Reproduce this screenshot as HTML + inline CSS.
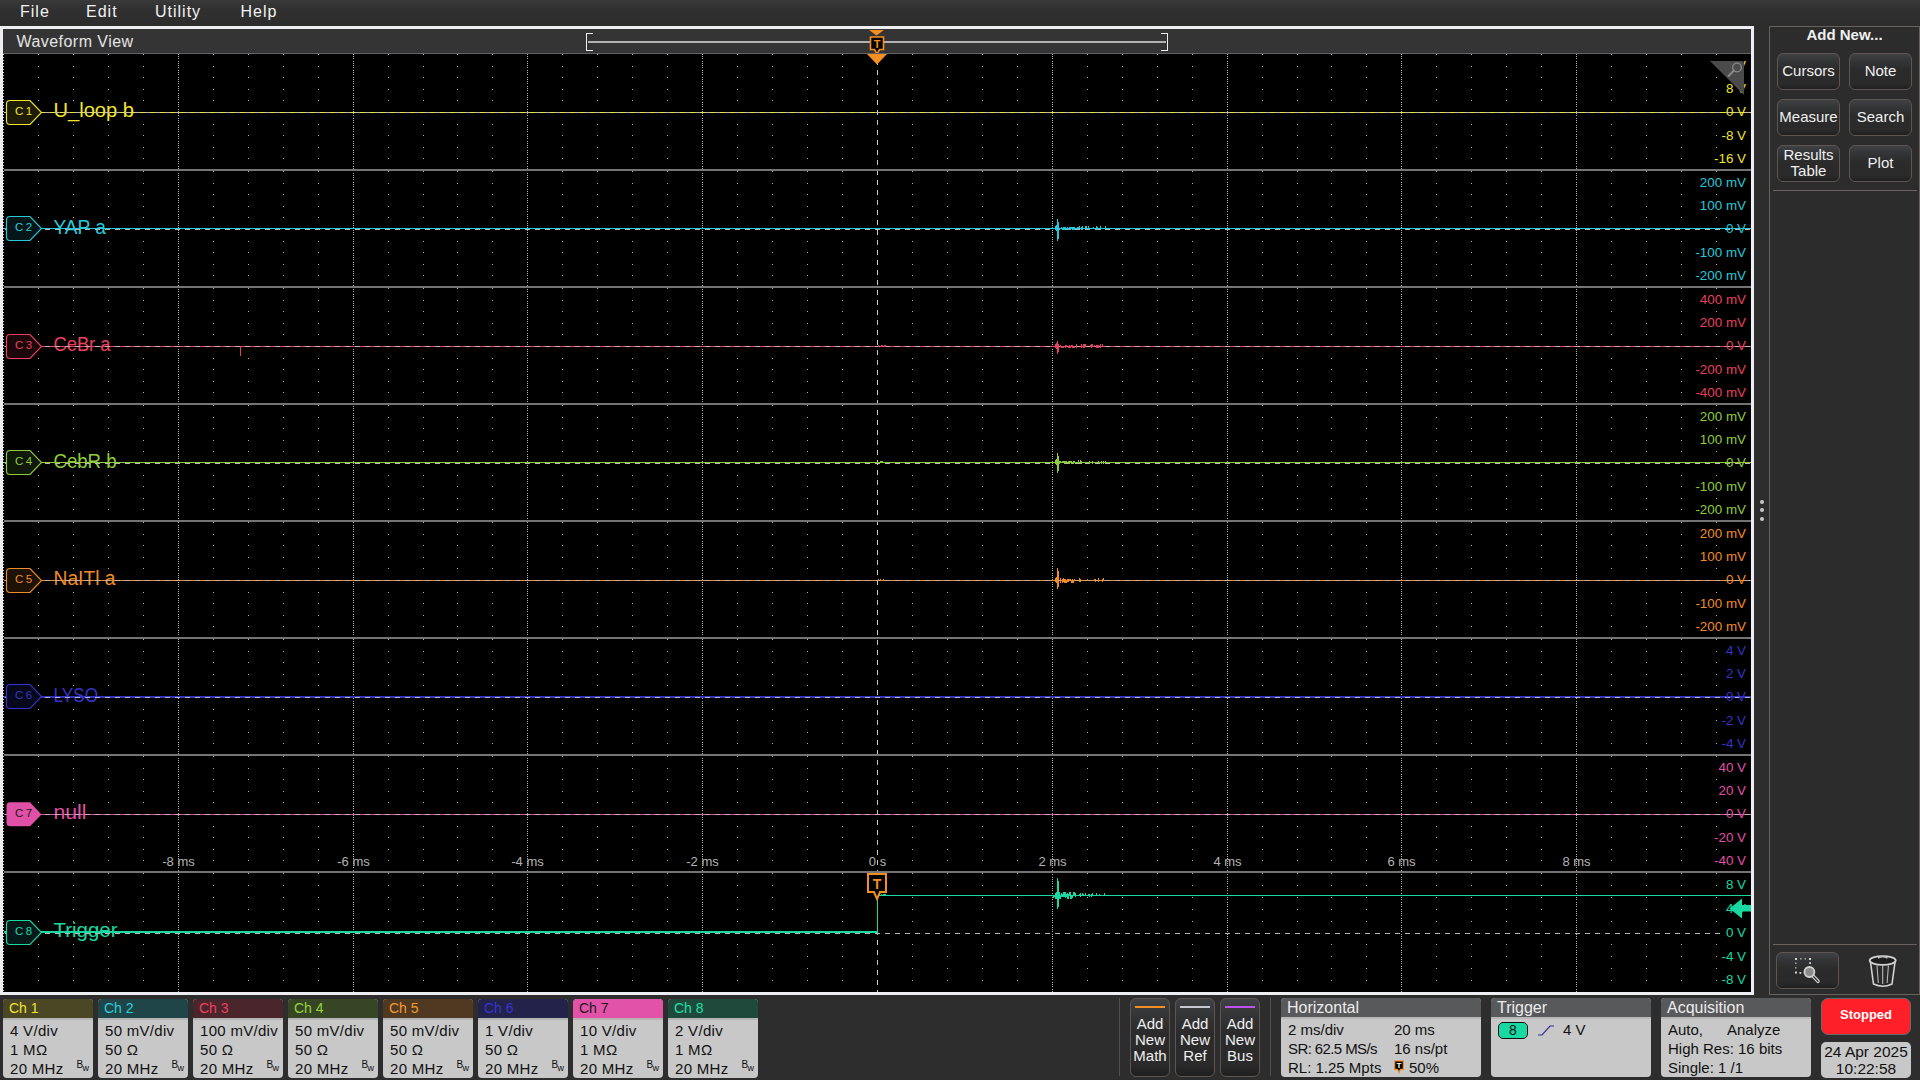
<!DOCTYPE html><html><head><meta charset="utf-8"><style>
html,body{margin:0;padding:0;width:1920px;height:1080px;overflow:hidden;background:#2d2d2d;font-family:"Liberation Sans", sans-serif}
.a{position:absolute}
.menu{left:0;top:0;width:1920px;height:26px;background:linear-gradient(#3a3a3a,#303030 35%,#2c2c2c)}
.mi{position:absolute;top:3px;font-size:16px;letter-spacing:1px;color:#f2f2f2}
.frame{left:0;top:26px;width:1748px;height:963px;border:3px solid #eceef1}
.hdr{left:3px;top:29px;width:1748px;height:24px;background:#343434}
.btn{position:absolute;border:1px solid #5e5550;border-radius:6px;background:linear-gradient(#404144,#333436 22%,#2b2b2b 45%,#2a2a2a 85%,#1f1f1f);color:#f0f0f0;font-size:15px;text-align:center;box-sizing:border-box}
.chb{position:absolute;top:999px;width:90px;height:79px;border-radius:4px;background:#c8c8c8;overflow:hidden}
.chb .h{height:19px;font-size:14px;padding-left:6px;line-height:19px}
.chb .bd{border-top:2px solid #b4b4b4;padding-left:7px;padding-top:1px;font-size:15px;letter-spacing:0.3px;color:#111;line-height:19px}
.box{position:absolute;top:998px;height:79px;border-radius:4px;background:#c8c8c8;overflow:hidden}
.box .h{height:19px;background:#58595b;color:#ececec;font-size:16px;line-height:19px;padding-left:6px}
.box .bd{border-top:2px solid #b8b8b8}
.t{position:absolute;font-size:15px;letter-spacing:0px;color:#111;white-space:nowrap;margin-top:1px}

</style></head><body>
<div class="a menu">
<div class="mi" style="left:20px">File</div>
<div class="mi" style="left:86px">Edit</div>
<div class="mi" style="left:155px">Utility</div>
<div class="mi" style="left:240.5px">Help</div>
</div>
<div class="a frame"></div>
<div class="a hdr"><div style="position:absolute;left:13.5px;top:4px;font-size:16px;letter-spacing:0.45px;color:#e4e4e4">Waveform View</div></div>
<div class="a" style="left:586px;top:33px;width:6px;height:16px;border:1.5px solid #eeeeee;border-right:none"></div>
<div class="a" style="left:1161px;top:33px;width:6px;height:16px;border:1.5px solid #eeeeee;border-left:none"></div>
<div class="a" style="left:588px;top:41px;width:578px;height:2px;background:#b2b2b2"></div>
<svg class="a" style="left:860px;top:26px" width="34" height="30"><path d="M9 4 H24 L16.5 9.5 Z" fill="#f28e22"/><path d="M10.5 11 H23.5 V23.5 H19.5 L17 28 L14.5 23.5 H10.5 Z" fill="#000" stroke="#f28e22" stroke-width="1.6"/><text x="17" y="21.5" font-size="11" font-weight="bold" fill="#f28e22" text-anchor="middle" font-family='"Liberation Sans", sans-serif'>T</text></svg>
<svg width="1920" height="1080" style="position:absolute;left:0;top:0" shape-rendering="crispEdges">
<rect x="3" y="53" width="1748" height="939" fill="#000"/>
<rect x="3" y="53" width="1748" height="1" fill="#5f6166"/>
<line x1="3.5" y1="54" x2="3.5" y2="992" stroke="#d0d0d0" stroke-width="1" stroke-dasharray="1 2"/>
<path d="M38 54.5h1m34 0h1m34 0h1m34 0h1m69 0h1m34 0h1m34 0h1m34 0h1m69 0h1m34 0h1m33 0h1m34 0h1m69 0h1m34 0h1m34 0h1m34 0h1m69 0h1m34 0h1m34 0h1m34 0h1m69 0h1m34 0h1m34 0h1m34 0h1m69 0h1m34 0h1m34 0h1m34 0h1m69 0h1m34 0h1m33 0h1m34 0h1m69 0h1m34 0h1m34 0h1m34 0h1m69 0h1m34 0h1m34 0h1m34 0h1M38 66.5h1m34 0h1m34 0h1m34 0h1m69 0h1m34 0h1m34 0h1m34 0h1m69 0h1m34 0h1m33 0h1m34 0h1m69 0h1m34 0h1m34 0h1m34 0h1m69 0h1m34 0h1m34 0h1m34 0h1m69 0h1m34 0h1m34 0h1m34 0h1m69 0h1m34 0h1m34 0h1m34 0h1m69 0h1m34 0h1m33 0h1m34 0h1m69 0h1m34 0h1m34 0h1m34 0h1m69 0h1m34 0h1m34 0h1m34 0h1M38 77.5h1m34 0h1m34 0h1m34 0h1m69 0h1m34 0h1m34 0h1m34 0h1m69 0h1m34 0h1m33 0h1m34 0h1m69 0h1m34 0h1m34 0h1m34 0h1m69 0h1m34 0h1m34 0h1m34 0h1m69 0h1m34 0h1m34 0h1m34 0h1m69 0h1m34 0h1m34 0h1m34 0h1m69 0h1m34 0h1m33 0h1m34 0h1m69 0h1m34 0h1m34 0h1m34 0h1m69 0h1m34 0h1m34 0h1m34 0h1M38 89.5h1m34 0h1m34 0h1m34 0h1m69 0h1m34 0h1m34 0h1m34 0h1m69 0h1m34 0h1m33 0h1m34 0h1m69 0h1m34 0h1m34 0h1m34 0h1m69 0h1m34 0h1m34 0h1m34 0h1m69 0h1m34 0h1m34 0h1m34 0h1m69 0h1m34 0h1m34 0h1m34 0h1m69 0h1m34 0h1m33 0h1m34 0h1m69 0h1m34 0h1m34 0h1m34 0h1m69 0h1m34 0h1m34 0h1m34 0h1M38 100.5h1m34 0h1m34 0h1m34 0h1m69 0h1m34 0h1m34 0h1m34 0h1m69 0h1m34 0h1m33 0h1m34 0h1m69 0h1m34 0h1m34 0h1m34 0h1m69 0h1m34 0h1m34 0h1m34 0h1m69 0h1m34 0h1m34 0h1m34 0h1m69 0h1m34 0h1m34 0h1m34 0h1m69 0h1m34 0h1m33 0h1m34 0h1m69 0h1m34 0h1m34 0h1m34 0h1m69 0h1m34 0h1m34 0h1m34 0h1M38 124.5h1m34 0h1m34 0h1m34 0h1m69 0h1m34 0h1m34 0h1m34 0h1m69 0h1m34 0h1m33 0h1m34 0h1m69 0h1m34 0h1m34 0h1m34 0h1m69 0h1m34 0h1m34 0h1m34 0h1m69 0h1m34 0h1m34 0h1m34 0h1m69 0h1m34 0h1m34 0h1m34 0h1m69 0h1m34 0h1m33 0h1m34 0h1m69 0h1m34 0h1m34 0h1m34 0h1m69 0h1m34 0h1m34 0h1m34 0h1M38 135.5h1m34 0h1m34 0h1m34 0h1m69 0h1m34 0h1m34 0h1m34 0h1m69 0h1m34 0h1m33 0h1m34 0h1m69 0h1m34 0h1m34 0h1m34 0h1m69 0h1m34 0h1m34 0h1m34 0h1m69 0h1m34 0h1m34 0h1m34 0h1m69 0h1m34 0h1m34 0h1m34 0h1m69 0h1m34 0h1m33 0h1m34 0h1m69 0h1m34 0h1m34 0h1m34 0h1m69 0h1m34 0h1m34 0h1m34 0h1M38 147.5h1m34 0h1m34 0h1m34 0h1m69 0h1m34 0h1m34 0h1m34 0h1m69 0h1m34 0h1m33 0h1m34 0h1m69 0h1m34 0h1m34 0h1m34 0h1m69 0h1m34 0h1m34 0h1m34 0h1m69 0h1m34 0h1m34 0h1m34 0h1m69 0h1m34 0h1m34 0h1m34 0h1m69 0h1m34 0h1m33 0h1m34 0h1m69 0h1m34 0h1m34 0h1m34 0h1m69 0h1m34 0h1m34 0h1m34 0h1M38 158.5h1m34 0h1m34 0h1m34 0h1m69 0h1m34 0h1m34 0h1m34 0h1m69 0h1m34 0h1m33 0h1m34 0h1m69 0h1m34 0h1m34 0h1m34 0h1m69 0h1m34 0h1m34 0h1m34 0h1m69 0h1m34 0h1m34 0h1m34 0h1m69 0h1m34 0h1m34 0h1m34 0h1m69 0h1m34 0h1m33 0h1m34 0h1m69 0h1m34 0h1m34 0h1m34 0h1m69 0h1m34 0h1m34 0h1m34 0h1M38 171.5h1m34 0h1m34 0h1m34 0h1m69 0h1m34 0h1m34 0h1m34 0h1m69 0h1m34 0h1m33 0h1m34 0h1m69 0h1m34 0h1m34 0h1m34 0h1m69 0h1m34 0h1m34 0h1m34 0h1m69 0h1m34 0h1m34 0h1m34 0h1m69 0h1m34 0h1m34 0h1m34 0h1m69 0h1m34 0h1m33 0h1m34 0h1m69 0h1m34 0h1m34 0h1m34 0h1m69 0h1m34 0h1m34 0h1m34 0h1M38 183.5h1m34 0h1m34 0h1m34 0h1m69 0h1m34 0h1m34 0h1m34 0h1m69 0h1m34 0h1m33 0h1m34 0h1m69 0h1m34 0h1m34 0h1m34 0h1m69 0h1m34 0h1m34 0h1m34 0h1m69 0h1m34 0h1m34 0h1m34 0h1m69 0h1m34 0h1m34 0h1m34 0h1m69 0h1m34 0h1m33 0h1m34 0h1m69 0h1m34 0h1m34 0h1m34 0h1m69 0h1m34 0h1m34 0h1m34 0h1M38 194.5h1m34 0h1m34 0h1m34 0h1m69 0h1m34 0h1m34 0h1m34 0h1m69 0h1m34 0h1m33 0h1m34 0h1m69 0h1m34 0h1m34 0h1m34 0h1m69 0h1m34 0h1m34 0h1m34 0h1m69 0h1m34 0h1m34 0h1m34 0h1m69 0h1m34 0h1m34 0h1m34 0h1m69 0h1m34 0h1m33 0h1m34 0h1m69 0h1m34 0h1m34 0h1m34 0h1m69 0h1m34 0h1m34 0h1m34 0h1M38 206.5h1m34 0h1m34 0h1m34 0h1m69 0h1m34 0h1m34 0h1m34 0h1m69 0h1m34 0h1m33 0h1m34 0h1m69 0h1m34 0h1m34 0h1m34 0h1m69 0h1m34 0h1m34 0h1m34 0h1m69 0h1m34 0h1m34 0h1m34 0h1m69 0h1m34 0h1m34 0h1m34 0h1m69 0h1m34 0h1m33 0h1m34 0h1m69 0h1m34 0h1m34 0h1m34 0h1m69 0h1m34 0h1m34 0h1m34 0h1M38 217.5h1m34 0h1m34 0h1m34 0h1m69 0h1m34 0h1m34 0h1m34 0h1m69 0h1m34 0h1m33 0h1m34 0h1m69 0h1m34 0h1m34 0h1m34 0h1m69 0h1m34 0h1m34 0h1m34 0h1m69 0h1m34 0h1m34 0h1m34 0h1m69 0h1m34 0h1m34 0h1m34 0h1m69 0h1m34 0h1m33 0h1m34 0h1m69 0h1m34 0h1m34 0h1m34 0h1m69 0h1m34 0h1m34 0h1m34 0h1M38 241.5h1m34 0h1m34 0h1m34 0h1m69 0h1m34 0h1m34 0h1m34 0h1m69 0h1m34 0h1m33 0h1m34 0h1m69 0h1m34 0h1m34 0h1m34 0h1m69 0h1m34 0h1m34 0h1m34 0h1m69 0h1m34 0h1m34 0h1m34 0h1m69 0h1m34 0h1m34 0h1m34 0h1m69 0h1m34 0h1m33 0h1m34 0h1m69 0h1m34 0h1m34 0h1m34 0h1m69 0h1m34 0h1m34 0h1m34 0h1M38 252.5h1m34 0h1m34 0h1m34 0h1m69 0h1m34 0h1m34 0h1m34 0h1m69 0h1m34 0h1m33 0h1m34 0h1m69 0h1m34 0h1m34 0h1m34 0h1m69 0h1m34 0h1m34 0h1m34 0h1m69 0h1m34 0h1m34 0h1m34 0h1m69 0h1m34 0h1m34 0h1m34 0h1m69 0h1m34 0h1m33 0h1m34 0h1m69 0h1m34 0h1m34 0h1m34 0h1m69 0h1m34 0h1m34 0h1m34 0h1M38 264.5h1m34 0h1m34 0h1m34 0h1m69 0h1m34 0h1m34 0h1m34 0h1m69 0h1m34 0h1m33 0h1m34 0h1m69 0h1m34 0h1m34 0h1m34 0h1m69 0h1m34 0h1m34 0h1m34 0h1m69 0h1m34 0h1m34 0h1m34 0h1m69 0h1m34 0h1m34 0h1m34 0h1m69 0h1m34 0h1m33 0h1m34 0h1m69 0h1m34 0h1m34 0h1m34 0h1m69 0h1m34 0h1m34 0h1m34 0h1M38 275.5h1m34 0h1m34 0h1m34 0h1m69 0h1m34 0h1m34 0h1m34 0h1m69 0h1m34 0h1m33 0h1m34 0h1m69 0h1m34 0h1m34 0h1m34 0h1m69 0h1m34 0h1m34 0h1m34 0h1m69 0h1m34 0h1m34 0h1m34 0h1m69 0h1m34 0h1m34 0h1m34 0h1m69 0h1m34 0h1m33 0h1m34 0h1m69 0h1m34 0h1m34 0h1m34 0h1m69 0h1m34 0h1m34 0h1m34 0h1M38 288.5h1m34 0h1m34 0h1m34 0h1m69 0h1m34 0h1m34 0h1m34 0h1m69 0h1m34 0h1m33 0h1m34 0h1m69 0h1m34 0h1m34 0h1m34 0h1m69 0h1m34 0h1m34 0h1m34 0h1m69 0h1m34 0h1m34 0h1m34 0h1m69 0h1m34 0h1m34 0h1m34 0h1m69 0h1m34 0h1m33 0h1m34 0h1m69 0h1m34 0h1m34 0h1m34 0h1m69 0h1m34 0h1m34 0h1m34 0h1M38 300.5h1m34 0h1m34 0h1m34 0h1m69 0h1m34 0h1m34 0h1m34 0h1m69 0h1m34 0h1m33 0h1m34 0h1m69 0h1m34 0h1m34 0h1m34 0h1m69 0h1m34 0h1m34 0h1m34 0h1m69 0h1m34 0h1m34 0h1m34 0h1m69 0h1m34 0h1m34 0h1m34 0h1m69 0h1m34 0h1m33 0h1m34 0h1m69 0h1m34 0h1m34 0h1m34 0h1m69 0h1m34 0h1m34 0h1m34 0h1M38 311.5h1m34 0h1m34 0h1m34 0h1m69 0h1m34 0h1m34 0h1m34 0h1m69 0h1m34 0h1m33 0h1m34 0h1m69 0h1m34 0h1m34 0h1m34 0h1m69 0h1m34 0h1m34 0h1m34 0h1m69 0h1m34 0h1m34 0h1m34 0h1m69 0h1m34 0h1m34 0h1m34 0h1m69 0h1m34 0h1m33 0h1m34 0h1m69 0h1m34 0h1m34 0h1m34 0h1m69 0h1m34 0h1m34 0h1m34 0h1M38 323.5h1m34 0h1m34 0h1m34 0h1m69 0h1m34 0h1m34 0h1m34 0h1m69 0h1m34 0h1m33 0h1m34 0h1m69 0h1m34 0h1m34 0h1m34 0h1m69 0h1m34 0h1m34 0h1m34 0h1m69 0h1m34 0h1m34 0h1m34 0h1m69 0h1m34 0h1m34 0h1m34 0h1m69 0h1m34 0h1m33 0h1m34 0h1m69 0h1m34 0h1m34 0h1m34 0h1m69 0h1m34 0h1m34 0h1m34 0h1M38 334.5h1m34 0h1m34 0h1m34 0h1m69 0h1m34 0h1m34 0h1m34 0h1m69 0h1m34 0h1m33 0h1m34 0h1m69 0h1m34 0h1m34 0h1m34 0h1m69 0h1m34 0h1m34 0h1m34 0h1m69 0h1m34 0h1m34 0h1m34 0h1m69 0h1m34 0h1m34 0h1m34 0h1m69 0h1m34 0h1m33 0h1m34 0h1m69 0h1m34 0h1m34 0h1m34 0h1m69 0h1m34 0h1m34 0h1m34 0h1M38 358.5h1m34 0h1m34 0h1m34 0h1m69 0h1m34 0h1m34 0h1m34 0h1m69 0h1m34 0h1m33 0h1m34 0h1m69 0h1m34 0h1m34 0h1m34 0h1m69 0h1m34 0h1m34 0h1m34 0h1m69 0h1m34 0h1m34 0h1m34 0h1m69 0h1m34 0h1m34 0h1m34 0h1m69 0h1m34 0h1m33 0h1m34 0h1m69 0h1m34 0h1m34 0h1m34 0h1m69 0h1m34 0h1m34 0h1m34 0h1M38 369.5h1m34 0h1m34 0h1m34 0h1m69 0h1m34 0h1m34 0h1m34 0h1m69 0h1m34 0h1m33 0h1m34 0h1m69 0h1m34 0h1m34 0h1m34 0h1m69 0h1m34 0h1m34 0h1m34 0h1m69 0h1m34 0h1m34 0h1m34 0h1m69 0h1m34 0h1m34 0h1m34 0h1m69 0h1m34 0h1m33 0h1m34 0h1m69 0h1m34 0h1m34 0h1m34 0h1m69 0h1m34 0h1m34 0h1m34 0h1M38 381.5h1m34 0h1m34 0h1m34 0h1m69 0h1m34 0h1m34 0h1m34 0h1m69 0h1m34 0h1m33 0h1m34 0h1m69 0h1m34 0h1m34 0h1m34 0h1m69 0h1m34 0h1m34 0h1m34 0h1m69 0h1m34 0h1m34 0h1m34 0h1m69 0h1m34 0h1m34 0h1m34 0h1m69 0h1m34 0h1m33 0h1m34 0h1m69 0h1m34 0h1m34 0h1m34 0h1m69 0h1m34 0h1m34 0h1m34 0h1M38 392.5h1m34 0h1m34 0h1m34 0h1m69 0h1m34 0h1m34 0h1m34 0h1m69 0h1m34 0h1m33 0h1m34 0h1m69 0h1m34 0h1m34 0h1m34 0h1m69 0h1m34 0h1m34 0h1m34 0h1m69 0h1m34 0h1m34 0h1m34 0h1m69 0h1m34 0h1m34 0h1m34 0h1m69 0h1m34 0h1m33 0h1m34 0h1m69 0h1m34 0h1m34 0h1m34 0h1m69 0h1m34 0h1m34 0h1m34 0h1M38 405.5h1m34 0h1m34 0h1m34 0h1m69 0h1m34 0h1m34 0h1m34 0h1m69 0h1m34 0h1m33 0h1m34 0h1m69 0h1m34 0h1m34 0h1m34 0h1m69 0h1m34 0h1m34 0h1m34 0h1m69 0h1m34 0h1m34 0h1m34 0h1m69 0h1m34 0h1m34 0h1m34 0h1m69 0h1m34 0h1m33 0h1m34 0h1m69 0h1m34 0h1m34 0h1m34 0h1m69 0h1m34 0h1m34 0h1m34 0h1M38 417.5h1m34 0h1m34 0h1m34 0h1m69 0h1m34 0h1m34 0h1m34 0h1m69 0h1m34 0h1m33 0h1m34 0h1m69 0h1m34 0h1m34 0h1m34 0h1m69 0h1m34 0h1m34 0h1m34 0h1m69 0h1m34 0h1m34 0h1m34 0h1m69 0h1m34 0h1m34 0h1m34 0h1m69 0h1m34 0h1m33 0h1m34 0h1m69 0h1m34 0h1m34 0h1m34 0h1m69 0h1m34 0h1m34 0h1m34 0h1M38 428.5h1m34 0h1m34 0h1m34 0h1m69 0h1m34 0h1m34 0h1m34 0h1m69 0h1m34 0h1m33 0h1m34 0h1m69 0h1m34 0h1m34 0h1m34 0h1m69 0h1m34 0h1m34 0h1m34 0h1m69 0h1m34 0h1m34 0h1m34 0h1m69 0h1m34 0h1m34 0h1m34 0h1m69 0h1m34 0h1m33 0h1m34 0h1m69 0h1m34 0h1m34 0h1m34 0h1m69 0h1m34 0h1m34 0h1m34 0h1M38 440.5h1m34 0h1m34 0h1m34 0h1m69 0h1m34 0h1m34 0h1m34 0h1m69 0h1m34 0h1m33 0h1m34 0h1m69 0h1m34 0h1m34 0h1m34 0h1m69 0h1m34 0h1m34 0h1m34 0h1m69 0h1m34 0h1m34 0h1m34 0h1m69 0h1m34 0h1m34 0h1m34 0h1m69 0h1m34 0h1m33 0h1m34 0h1m69 0h1m34 0h1m34 0h1m34 0h1m69 0h1m34 0h1m34 0h1m34 0h1M38 451.5h1m34 0h1m34 0h1m34 0h1m69 0h1m34 0h1m34 0h1m34 0h1m69 0h1m34 0h1m33 0h1m34 0h1m69 0h1m34 0h1m34 0h1m34 0h1m69 0h1m34 0h1m34 0h1m34 0h1m69 0h1m34 0h1m34 0h1m34 0h1m69 0h1m34 0h1m34 0h1m34 0h1m69 0h1m34 0h1m33 0h1m34 0h1m69 0h1m34 0h1m34 0h1m34 0h1m69 0h1m34 0h1m34 0h1m34 0h1M38 475.5h1m34 0h1m34 0h1m34 0h1m69 0h1m34 0h1m34 0h1m34 0h1m69 0h1m34 0h1m33 0h1m34 0h1m69 0h1m34 0h1m34 0h1m34 0h1m69 0h1m34 0h1m34 0h1m34 0h1m69 0h1m34 0h1m34 0h1m34 0h1m69 0h1m34 0h1m34 0h1m34 0h1m69 0h1m34 0h1m33 0h1m34 0h1m69 0h1m34 0h1m34 0h1m34 0h1m69 0h1m34 0h1m34 0h1m34 0h1M38 486.5h1m34 0h1m34 0h1m34 0h1m69 0h1m34 0h1m34 0h1m34 0h1m69 0h1m34 0h1m33 0h1m34 0h1m69 0h1m34 0h1m34 0h1m34 0h1m69 0h1m34 0h1m34 0h1m34 0h1m69 0h1m34 0h1m34 0h1m34 0h1m69 0h1m34 0h1m34 0h1m34 0h1m69 0h1m34 0h1m33 0h1m34 0h1m69 0h1m34 0h1m34 0h1m34 0h1m69 0h1m34 0h1m34 0h1m34 0h1M38 498.5h1m34 0h1m34 0h1m34 0h1m69 0h1m34 0h1m34 0h1m34 0h1m69 0h1m34 0h1m33 0h1m34 0h1m69 0h1m34 0h1m34 0h1m34 0h1m69 0h1m34 0h1m34 0h1m34 0h1m69 0h1m34 0h1m34 0h1m34 0h1m69 0h1m34 0h1m34 0h1m34 0h1m69 0h1m34 0h1m33 0h1m34 0h1m69 0h1m34 0h1m34 0h1m34 0h1m69 0h1m34 0h1m34 0h1m34 0h1M38 509.5h1m34 0h1m34 0h1m34 0h1m69 0h1m34 0h1m34 0h1m34 0h1m69 0h1m34 0h1m33 0h1m34 0h1m69 0h1m34 0h1m34 0h1m34 0h1m69 0h1m34 0h1m34 0h1m34 0h1m69 0h1m34 0h1m34 0h1m34 0h1m69 0h1m34 0h1m34 0h1m34 0h1m69 0h1m34 0h1m33 0h1m34 0h1m69 0h1m34 0h1m34 0h1m34 0h1m69 0h1m34 0h1m34 0h1m34 0h1M38 522.5h1m34 0h1m34 0h1m34 0h1m69 0h1m34 0h1m34 0h1m34 0h1m69 0h1m34 0h1m33 0h1m34 0h1m69 0h1m34 0h1m34 0h1m34 0h1m69 0h1m34 0h1m34 0h1m34 0h1m69 0h1m34 0h1m34 0h1m34 0h1m69 0h1m34 0h1m34 0h1m34 0h1m69 0h1m34 0h1m33 0h1m34 0h1m69 0h1m34 0h1m34 0h1m34 0h1m69 0h1m34 0h1m34 0h1m34 0h1M38 534.5h1m34 0h1m34 0h1m34 0h1m69 0h1m34 0h1m34 0h1m34 0h1m69 0h1m34 0h1m33 0h1m34 0h1m69 0h1m34 0h1m34 0h1m34 0h1m69 0h1m34 0h1m34 0h1m34 0h1m69 0h1m34 0h1m34 0h1m34 0h1m69 0h1m34 0h1m34 0h1m34 0h1m69 0h1m34 0h1m33 0h1m34 0h1m69 0h1m34 0h1m34 0h1m34 0h1m69 0h1m34 0h1m34 0h1m34 0h1M38 545.5h1m34 0h1m34 0h1m34 0h1m69 0h1m34 0h1m34 0h1m34 0h1m69 0h1m34 0h1m33 0h1m34 0h1m69 0h1m34 0h1m34 0h1m34 0h1m69 0h1m34 0h1m34 0h1m34 0h1m69 0h1m34 0h1m34 0h1m34 0h1m69 0h1m34 0h1m34 0h1m34 0h1m69 0h1m34 0h1m33 0h1m34 0h1m69 0h1m34 0h1m34 0h1m34 0h1m69 0h1m34 0h1m34 0h1m34 0h1M38 557.5h1m34 0h1m34 0h1m34 0h1m69 0h1m34 0h1m34 0h1m34 0h1m69 0h1m34 0h1m33 0h1m34 0h1m69 0h1m34 0h1m34 0h1m34 0h1m69 0h1m34 0h1m34 0h1m34 0h1m69 0h1m34 0h1m34 0h1m34 0h1m69 0h1m34 0h1m34 0h1m34 0h1m69 0h1m34 0h1m33 0h1m34 0h1m69 0h1m34 0h1m34 0h1m34 0h1m69 0h1m34 0h1m34 0h1m34 0h1M38 568.5h1m34 0h1m34 0h1m34 0h1m69 0h1m34 0h1m34 0h1m34 0h1m69 0h1m34 0h1m33 0h1m34 0h1m69 0h1m34 0h1m34 0h1m34 0h1m69 0h1m34 0h1m34 0h1m34 0h1m69 0h1m34 0h1m34 0h1m34 0h1m69 0h1m34 0h1m34 0h1m34 0h1m69 0h1m34 0h1m33 0h1m34 0h1m69 0h1m34 0h1m34 0h1m34 0h1m69 0h1m34 0h1m34 0h1m34 0h1M38 592.5h1m34 0h1m34 0h1m34 0h1m69 0h1m34 0h1m34 0h1m34 0h1m69 0h1m34 0h1m33 0h1m34 0h1m69 0h1m34 0h1m34 0h1m34 0h1m69 0h1m34 0h1m34 0h1m34 0h1m69 0h1m34 0h1m34 0h1m34 0h1m69 0h1m34 0h1m34 0h1m34 0h1m69 0h1m34 0h1m33 0h1m34 0h1m69 0h1m34 0h1m34 0h1m34 0h1m69 0h1m34 0h1m34 0h1m34 0h1M38 603.5h1m34 0h1m34 0h1m34 0h1m69 0h1m34 0h1m34 0h1m34 0h1m69 0h1m34 0h1m33 0h1m34 0h1m69 0h1m34 0h1m34 0h1m34 0h1m69 0h1m34 0h1m34 0h1m34 0h1m69 0h1m34 0h1m34 0h1m34 0h1m69 0h1m34 0h1m34 0h1m34 0h1m69 0h1m34 0h1m33 0h1m34 0h1m69 0h1m34 0h1m34 0h1m34 0h1m69 0h1m34 0h1m34 0h1m34 0h1M38 615.5h1m34 0h1m34 0h1m34 0h1m69 0h1m34 0h1m34 0h1m34 0h1m69 0h1m34 0h1m33 0h1m34 0h1m69 0h1m34 0h1m34 0h1m34 0h1m69 0h1m34 0h1m34 0h1m34 0h1m69 0h1m34 0h1m34 0h1m34 0h1m69 0h1m34 0h1m34 0h1m34 0h1m69 0h1m34 0h1m33 0h1m34 0h1m69 0h1m34 0h1m34 0h1m34 0h1m69 0h1m34 0h1m34 0h1m34 0h1M38 626.5h1m34 0h1m34 0h1m34 0h1m69 0h1m34 0h1m34 0h1m34 0h1m69 0h1m34 0h1m33 0h1m34 0h1m69 0h1m34 0h1m34 0h1m34 0h1m69 0h1m34 0h1m34 0h1m34 0h1m69 0h1m34 0h1m34 0h1m34 0h1m69 0h1m34 0h1m34 0h1m34 0h1m69 0h1m34 0h1m33 0h1m34 0h1m69 0h1m34 0h1m34 0h1m34 0h1m69 0h1m34 0h1m34 0h1m34 0h1M38 639.5h1m34 0h1m34 0h1m34 0h1m69 0h1m34 0h1m34 0h1m34 0h1m69 0h1m34 0h1m33 0h1m34 0h1m69 0h1m34 0h1m34 0h1m34 0h1m69 0h1m34 0h1m34 0h1m34 0h1m69 0h1m34 0h1m34 0h1m34 0h1m69 0h1m34 0h1m34 0h1m34 0h1m69 0h1m34 0h1m33 0h1m34 0h1m69 0h1m34 0h1m34 0h1m34 0h1m69 0h1m34 0h1m34 0h1m34 0h1M38 651.5h1m34 0h1m34 0h1m34 0h1m69 0h1m34 0h1m34 0h1m34 0h1m69 0h1m34 0h1m33 0h1m34 0h1m69 0h1m34 0h1m34 0h1m34 0h1m69 0h1m34 0h1m34 0h1m34 0h1m69 0h1m34 0h1m34 0h1m34 0h1m69 0h1m34 0h1m34 0h1m34 0h1m69 0h1m34 0h1m33 0h1m34 0h1m69 0h1m34 0h1m34 0h1m34 0h1m69 0h1m34 0h1m34 0h1m34 0h1M38 662.5h1m34 0h1m34 0h1m34 0h1m69 0h1m34 0h1m34 0h1m34 0h1m69 0h1m34 0h1m33 0h1m34 0h1m69 0h1m34 0h1m34 0h1m34 0h1m69 0h1m34 0h1m34 0h1m34 0h1m69 0h1m34 0h1m34 0h1m34 0h1m69 0h1m34 0h1m34 0h1m34 0h1m69 0h1m34 0h1m33 0h1m34 0h1m69 0h1m34 0h1m34 0h1m34 0h1m69 0h1m34 0h1m34 0h1m34 0h1M38 674.5h1m34 0h1m34 0h1m34 0h1m69 0h1m34 0h1m34 0h1m34 0h1m69 0h1m34 0h1m33 0h1m34 0h1m69 0h1m34 0h1m34 0h1m34 0h1m69 0h1m34 0h1m34 0h1m34 0h1m69 0h1m34 0h1m34 0h1m34 0h1m69 0h1m34 0h1m34 0h1m34 0h1m69 0h1m34 0h1m33 0h1m34 0h1m69 0h1m34 0h1m34 0h1m34 0h1m69 0h1m34 0h1m34 0h1m34 0h1M38 685.5h1m34 0h1m34 0h1m34 0h1m69 0h1m34 0h1m34 0h1m34 0h1m69 0h1m34 0h1m33 0h1m34 0h1m69 0h1m34 0h1m34 0h1m34 0h1m69 0h1m34 0h1m34 0h1m34 0h1m69 0h1m34 0h1m34 0h1m34 0h1m69 0h1m34 0h1m34 0h1m34 0h1m69 0h1m34 0h1m33 0h1m34 0h1m69 0h1m34 0h1m34 0h1m34 0h1m69 0h1m34 0h1m34 0h1m34 0h1M38 709.5h1m34 0h1m34 0h1m34 0h1m69 0h1m34 0h1m34 0h1m34 0h1m69 0h1m34 0h1m33 0h1m34 0h1m69 0h1m34 0h1m34 0h1m34 0h1m69 0h1m34 0h1m34 0h1m34 0h1m69 0h1m34 0h1m34 0h1m34 0h1m69 0h1m34 0h1m34 0h1m34 0h1m69 0h1m34 0h1m33 0h1m34 0h1m69 0h1m34 0h1m34 0h1m34 0h1m69 0h1m34 0h1m34 0h1m34 0h1M38 720.5h1m34 0h1m34 0h1m34 0h1m69 0h1m34 0h1m34 0h1m34 0h1m69 0h1m34 0h1m33 0h1m34 0h1m69 0h1m34 0h1m34 0h1m34 0h1m69 0h1m34 0h1m34 0h1m34 0h1m69 0h1m34 0h1m34 0h1m34 0h1m69 0h1m34 0h1m34 0h1m34 0h1m69 0h1m34 0h1m33 0h1m34 0h1m69 0h1m34 0h1m34 0h1m34 0h1m69 0h1m34 0h1m34 0h1m34 0h1M38 732.5h1m34 0h1m34 0h1m34 0h1m69 0h1m34 0h1m34 0h1m34 0h1m69 0h1m34 0h1m33 0h1m34 0h1m69 0h1m34 0h1m34 0h1m34 0h1m69 0h1m34 0h1m34 0h1m34 0h1m69 0h1m34 0h1m34 0h1m34 0h1m69 0h1m34 0h1m34 0h1m34 0h1m69 0h1m34 0h1m33 0h1m34 0h1m69 0h1m34 0h1m34 0h1m34 0h1m69 0h1m34 0h1m34 0h1m34 0h1M38 743.5h1m34 0h1m34 0h1m34 0h1m69 0h1m34 0h1m34 0h1m34 0h1m69 0h1m34 0h1m33 0h1m34 0h1m69 0h1m34 0h1m34 0h1m34 0h1m69 0h1m34 0h1m34 0h1m34 0h1m69 0h1m34 0h1m34 0h1m34 0h1m69 0h1m34 0h1m34 0h1m34 0h1m69 0h1m34 0h1m33 0h1m34 0h1m69 0h1m34 0h1m34 0h1m34 0h1m69 0h1m34 0h1m34 0h1m34 0h1M38 756.5h1m34 0h1m34 0h1m34 0h1m69 0h1m34 0h1m34 0h1m34 0h1m69 0h1m34 0h1m33 0h1m34 0h1m69 0h1m34 0h1m34 0h1m34 0h1m69 0h1m34 0h1m34 0h1m34 0h1m69 0h1m34 0h1m34 0h1m34 0h1m69 0h1m34 0h1m34 0h1m34 0h1m69 0h1m34 0h1m33 0h1m34 0h1m69 0h1m34 0h1m34 0h1m34 0h1m69 0h1m34 0h1m34 0h1m34 0h1M38 768.5h1m34 0h1m34 0h1m34 0h1m69 0h1m34 0h1m34 0h1m34 0h1m69 0h1m34 0h1m33 0h1m34 0h1m69 0h1m34 0h1m34 0h1m34 0h1m69 0h1m34 0h1m34 0h1m34 0h1m69 0h1m34 0h1m34 0h1m34 0h1m69 0h1m34 0h1m34 0h1m34 0h1m69 0h1m34 0h1m33 0h1m34 0h1m69 0h1m34 0h1m34 0h1m34 0h1m69 0h1m34 0h1m34 0h1m34 0h1M38 779.5h1m34 0h1m34 0h1m34 0h1m69 0h1m34 0h1m34 0h1m34 0h1m69 0h1m34 0h1m33 0h1m34 0h1m69 0h1m34 0h1m34 0h1m34 0h1m69 0h1m34 0h1m34 0h1m34 0h1m69 0h1m34 0h1m34 0h1m34 0h1m69 0h1m34 0h1m34 0h1m34 0h1m69 0h1m34 0h1m33 0h1m34 0h1m69 0h1m34 0h1m34 0h1m34 0h1m69 0h1m34 0h1m34 0h1m34 0h1M38 791.5h1m34 0h1m34 0h1m34 0h1m69 0h1m34 0h1m34 0h1m34 0h1m69 0h1m34 0h1m33 0h1m34 0h1m69 0h1m34 0h1m34 0h1m34 0h1m69 0h1m34 0h1m34 0h1m34 0h1m69 0h1m34 0h1m34 0h1m34 0h1m69 0h1m34 0h1m34 0h1m34 0h1m69 0h1m34 0h1m33 0h1m34 0h1m69 0h1m34 0h1m34 0h1m34 0h1m69 0h1m34 0h1m34 0h1m34 0h1M38 802.5h1m34 0h1m34 0h1m34 0h1m69 0h1m34 0h1m34 0h1m34 0h1m69 0h1m34 0h1m33 0h1m34 0h1m69 0h1m34 0h1m34 0h1m34 0h1m69 0h1m34 0h1m34 0h1m34 0h1m69 0h1m34 0h1m34 0h1m34 0h1m69 0h1m34 0h1m34 0h1m34 0h1m69 0h1m34 0h1m33 0h1m34 0h1m69 0h1m34 0h1m34 0h1m34 0h1m69 0h1m34 0h1m34 0h1m34 0h1M38 826.5h1m34 0h1m34 0h1m34 0h1m69 0h1m34 0h1m34 0h1m34 0h1m69 0h1m34 0h1m33 0h1m34 0h1m69 0h1m34 0h1m34 0h1m34 0h1m69 0h1m34 0h1m34 0h1m34 0h1m69 0h1m34 0h1m34 0h1m34 0h1m69 0h1m34 0h1m34 0h1m34 0h1m69 0h1m34 0h1m33 0h1m34 0h1m69 0h1m34 0h1m34 0h1m34 0h1m69 0h1m34 0h1m34 0h1m34 0h1M38 837.5h1m34 0h1m34 0h1m34 0h1m69 0h1m34 0h1m34 0h1m34 0h1m69 0h1m34 0h1m33 0h1m34 0h1m69 0h1m34 0h1m34 0h1m34 0h1m69 0h1m34 0h1m34 0h1m34 0h1m69 0h1m34 0h1m34 0h1m34 0h1m69 0h1m34 0h1m34 0h1m34 0h1m69 0h1m34 0h1m33 0h1m34 0h1m69 0h1m34 0h1m34 0h1m34 0h1m69 0h1m34 0h1m34 0h1m34 0h1M38 849.5h1m34 0h1m34 0h1m34 0h1m69 0h1m34 0h1m34 0h1m34 0h1m69 0h1m34 0h1m33 0h1m34 0h1m69 0h1m34 0h1m34 0h1m34 0h1m69 0h1m34 0h1m34 0h1m34 0h1m69 0h1m34 0h1m34 0h1m34 0h1m69 0h1m34 0h1m34 0h1m34 0h1m69 0h1m34 0h1m33 0h1m34 0h1m69 0h1m34 0h1m34 0h1m34 0h1m69 0h1m34 0h1m34 0h1m34 0h1M38 860.5h1m34 0h1m34 0h1m34 0h1m69 0h1m34 0h1m34 0h1m34 0h1m69 0h1m34 0h1m33 0h1m34 0h1m69 0h1m34 0h1m34 0h1m34 0h1m69 0h1m34 0h1m34 0h1m34 0h1m69 0h1m34 0h1m34 0h1m34 0h1m69 0h1m34 0h1m34 0h1m34 0h1m69 0h1m34 0h1m33 0h1m34 0h1m69 0h1m34 0h1m34 0h1m34 0h1m69 0h1m34 0h1m34 0h1m34 0h1M38 873.5h1m34 0h1m34 0h1m34 0h1m69 0h1m34 0h1m34 0h1m34 0h1m69 0h1m34 0h1m33 0h1m34 0h1m69 0h1m34 0h1m34 0h1m34 0h1m69 0h1m34 0h1m34 0h1m34 0h1m69 0h1m34 0h1m34 0h1m34 0h1m69 0h1m34 0h1m34 0h1m34 0h1m69 0h1m34 0h1m33 0h1m34 0h1m69 0h1m34 0h1m34 0h1m34 0h1m69 0h1m34 0h1m34 0h1m34 0h1M38 885.5h1m34 0h1m34 0h1m34 0h1m69 0h1m34 0h1m34 0h1m34 0h1m69 0h1m34 0h1m33 0h1m34 0h1m69 0h1m34 0h1m34 0h1m34 0h1m69 0h1m34 0h1m34 0h1m34 0h1m69 0h1m34 0h1m34 0h1m34 0h1m69 0h1m34 0h1m34 0h1m34 0h1m69 0h1m34 0h1m33 0h1m34 0h1m69 0h1m34 0h1m34 0h1m34 0h1m69 0h1m34 0h1m34 0h1m34 0h1M38 897.5h1m34 0h1m34 0h1m34 0h1m69 0h1m34 0h1m34 0h1m34 0h1m69 0h1m34 0h1m33 0h1m34 0h1m69 0h1m34 0h1m34 0h1m34 0h1m69 0h1m34 0h1m34 0h1m34 0h1m69 0h1m34 0h1m34 0h1m34 0h1m69 0h1m34 0h1m34 0h1m34 0h1m69 0h1m34 0h1m33 0h1m34 0h1m69 0h1m34 0h1m34 0h1m34 0h1m69 0h1m34 0h1m34 0h1m34 0h1M38 909.5h1m34 0h1m34 0h1m34 0h1m69 0h1m34 0h1m34 0h1m34 0h1m69 0h1m34 0h1m33 0h1m34 0h1m69 0h1m34 0h1m34 0h1m34 0h1m69 0h1m34 0h1m34 0h1m34 0h1m69 0h1m34 0h1m34 0h1m34 0h1m69 0h1m34 0h1m34 0h1m34 0h1m69 0h1m34 0h1m33 0h1m34 0h1m69 0h1m34 0h1m34 0h1m34 0h1m69 0h1m34 0h1m34 0h1m34 0h1M38 921.5h1m34 0h1m34 0h1m34 0h1m69 0h1m34 0h1m34 0h1m34 0h1m69 0h1m34 0h1m33 0h1m34 0h1m69 0h1m34 0h1m34 0h1m34 0h1m69 0h1m34 0h1m34 0h1m34 0h1m69 0h1m34 0h1m34 0h1m34 0h1m69 0h1m34 0h1m34 0h1m34 0h1m69 0h1m34 0h1m33 0h1m34 0h1m69 0h1m34 0h1m34 0h1m34 0h1m69 0h1m34 0h1m34 0h1m34 0h1M38 944.5h1m34 0h1m34 0h1m34 0h1m69 0h1m34 0h1m34 0h1m34 0h1m69 0h1m34 0h1m33 0h1m34 0h1m69 0h1m34 0h1m34 0h1m34 0h1m69 0h1m34 0h1m34 0h1m34 0h1m69 0h1m34 0h1m34 0h1m34 0h1m69 0h1m34 0h1m34 0h1m34 0h1m69 0h1m34 0h1m33 0h1m34 0h1m69 0h1m34 0h1m34 0h1m34 0h1m69 0h1m34 0h1m34 0h1m34 0h1M38 956.5h1m34 0h1m34 0h1m34 0h1m69 0h1m34 0h1m34 0h1m34 0h1m69 0h1m34 0h1m33 0h1m34 0h1m69 0h1m34 0h1m34 0h1m34 0h1m69 0h1m34 0h1m34 0h1m34 0h1m69 0h1m34 0h1m34 0h1m34 0h1m69 0h1m34 0h1m34 0h1m34 0h1m69 0h1m34 0h1m33 0h1m34 0h1m69 0h1m34 0h1m34 0h1m34 0h1m69 0h1m34 0h1m34 0h1m34 0h1M38 968.5h1m34 0h1m34 0h1m34 0h1m69 0h1m34 0h1m34 0h1m34 0h1m69 0h1m34 0h1m33 0h1m34 0h1m69 0h1m34 0h1m34 0h1m34 0h1m69 0h1m34 0h1m34 0h1m34 0h1m69 0h1m34 0h1m34 0h1m34 0h1m69 0h1m34 0h1m34 0h1m34 0h1m69 0h1m34 0h1m33 0h1m34 0h1m69 0h1m34 0h1m34 0h1m34 0h1m69 0h1m34 0h1m34 0h1m34 0h1M38 980.5h1m34 0h1m34 0h1m34 0h1m69 0h1m34 0h1m34 0h1m34 0h1m69 0h1m34 0h1m33 0h1m34 0h1m69 0h1m34 0h1m34 0h1m34 0h1m69 0h1m34 0h1m34 0h1m34 0h1m69 0h1m34 0h1m34 0h1m34 0h1m69 0h1m34 0h1m34 0h1m34 0h1m69 0h1m34 0h1m33 0h1m34 0h1m69 0h1m34 0h1m34 0h1m34 0h1m69 0h1m34 0h1m34 0h1m34 0h1" stroke="#b8b8b8" stroke-width="1" fill="none"/>
<line x1="178.5" y1="54" x2="178.5" y2="992" stroke="#b4b4b4" stroke-width="1" stroke-dasharray="1 1 1 1 1 2 1 1 1 1 1 1 1 2"/>
<line x1="353.5" y1="54" x2="353.5" y2="992" stroke="#b4b4b4" stroke-width="1" stroke-dasharray="1 1 1 1 1 2 1 1 1 1 1 1 1 2"/>
<line x1="527.5" y1="54" x2="527.5" y2="992" stroke="#b4b4b4" stroke-width="1" stroke-dasharray="1 1 1 1 1 2 1 1 1 1 1 1 1 2"/>
<line x1="702.5" y1="54" x2="702.5" y2="992" stroke="#b4b4b4" stroke-width="1" stroke-dasharray="1 1 1 1 1 2 1 1 1 1 1 1 1 2"/>
<line x1="1052.5" y1="54" x2="1052.5" y2="992" stroke="#b4b4b4" stroke-width="1" stroke-dasharray="1 1 1 1 1 2 1 1 1 1 1 1 1 2"/>
<line x1="1227.5" y1="54" x2="1227.5" y2="992" stroke="#b4b4b4" stroke-width="1" stroke-dasharray="1 1 1 1 1 2 1 1 1 1 1 1 1 2"/>
<line x1="1401.5" y1="54" x2="1401.5" y2="992" stroke="#b4b4b4" stroke-width="1" stroke-dasharray="1 1 1 1 1 2 1 1 1 1 1 1 1 2"/>
<line x1="1576.5" y1="54" x2="1576.5" y2="992" stroke="#b4b4b4" stroke-width="1" stroke-dasharray="1 1 1 1 1 2 1 1 1 1 1 1 1 2"/>
<line x1="877.5" y1="60" x2="877.5" y2="992" stroke="#c8c8c8" stroke-width="1" stroke-dasharray="5 5"/>
<rect x="4" y="169" width="1747" height="2" fill="#747474"/>
<rect x="4" y="286" width="1747" height="2" fill="#747474"/>
<rect x="4" y="403" width="1747" height="2" fill="#747474"/>
<rect x="4" y="520" width="1747" height="2" fill="#747474"/>
<rect x="4" y="637" width="1747" height="2" fill="#747474"/>
<rect x="4" y="754" width="1747" height="2" fill="#747474"/>
<rect x="4" y="871" width="1747" height="2" fill="#747474"/>
<text x="53.5" y="116.8" font-size="19.5" fill="#f2e52a" stroke="#f2e52a" stroke-width="0" font-family='"Liberation Sans", sans-serif' textLength="80.5" lengthAdjust="spacingAndGlyphs">U_loop b</text>
<text x="53.5" y="233.8" font-size="19.5" fill="#26c9d9" stroke="#26c9d9" stroke-width="0" font-family='"Liberation Sans", sans-serif' textLength="52.5" lengthAdjust="spacingAndGlyphs">YAP a</text>
<text x="53.5" y="350.8" font-size="19.5" fill="#e8405e" stroke="#e8405e" stroke-width="0" font-family='"Liberation Sans", sans-serif' textLength="57.0" lengthAdjust="spacingAndGlyphs">CeBr a</text>
<text x="53.5" y="467.8" font-size="19.5" fill="#8fcc38" stroke="#8fcc38" stroke-width="0" font-family='"Liberation Sans", sans-serif' textLength="63.0" lengthAdjust="spacingAndGlyphs">CebR b</text>
<text x="53.5" y="584.8" font-size="19.5" fill="#f08c28" stroke="#f08c28" stroke-width="0" font-family='"Liberation Sans", sans-serif' textLength="62.0" lengthAdjust="spacingAndGlyphs">NaITl a</text>
<text x="53.5" y="701.8" font-size="19.5" fill="#3434c4" stroke="#3434c4" stroke-width="0" font-family='"Liberation Sans", sans-serif' textLength="44.5" lengthAdjust="spacingAndGlyphs">LYSO</text>
<text x="53.5" y="818.8" font-size="19.5" fill="#e050a6" stroke="#e050a6" stroke-width="0" font-family='"Liberation Sans", sans-serif' textLength="33.0" lengthAdjust="spacingAndGlyphs">null</text>
<text x="53.5" y="937.3" font-size="19.5" fill="#18d9a2" stroke="#18d9a2" stroke-width="0" font-family='"Liberation Sans", sans-serif' textLength="64.0" lengthAdjust="spacingAndGlyphs">Trigger</text>
<rect x="4" y="112" width="1747" height="1" fill="#f2e52a"/>
<line x1="4" y1="112.5" x2="1751" y2="112.5" stroke="#b8b8b8" stroke-width="1" stroke-dasharray="5 5" stroke-dashoffset="-1"/>
<rect x="4" y="228" width="1747" height="1" fill="#26c9d9"/>
<line x1="4" y1="229.5" x2="1751" y2="229.5" stroke="#b8b8b8" stroke-width="1" stroke-dasharray="5 5" stroke-dashoffset="-1"/>
<rect x="4" y="346" width="1747" height="1" fill="#e8405e"/>
<line x1="4" y1="346.5" x2="1751" y2="346.5" stroke="#b8b8b8" stroke-width="1" stroke-dasharray="5 5" stroke-dashoffset="-1"/>
<rect x="4" y="462" width="1747" height="1" fill="#8fcc38"/>
<line x1="4" y1="463.5" x2="1751" y2="463.5" stroke="#b8b8b8" stroke-width="1" stroke-dasharray="5 5" stroke-dashoffset="-1"/>
<rect x="4" y="580" width="1747" height="1" fill="#f08c28"/>
<line x1="4" y1="580.5" x2="1751" y2="580.5" stroke="#b8b8b8" stroke-width="1" stroke-dasharray="5 5" stroke-dashoffset="-1"/>
<rect x="4" y="696" width="1747" height="2" fill="#3434c4"/>
<line x1="4" y1="697.5" x2="1751" y2="697.5" stroke="#b8b8b8" stroke-width="1" stroke-dasharray="5 5" stroke-dashoffset="-1"/>
<rect x="4" y="814" width="1747" height="1" fill="#e050a6"/>
<line x1="4" y1="814.5" x2="1751" y2="814.5" stroke="#b8b8b8" stroke-width="1" stroke-dasharray="5 5" stroke-dashoffset="-1"/>
<path d="M4 932.5H877V895.5H1751" stroke="#18d9a2" stroke-width="1" fill="none"/>
<rect x="4" y="931" width="873" height="1" fill="#18d9a2"/>
<line x1="4" y1="933.5" x2="1721" y2="933.5" stroke="#b8b8b8" stroke-width="1" stroke-dasharray="5 5" stroke-dashoffset="-1"/>
<path d="M1057.5 219v22M1058.5 222v17M1056.5 225v6M1055.5 226v4M1061.5 227v2M1062.5 228v2M1063.5 227v3M1064.5 227v3M1065.5 227v3M1067.5 227v3M1068.5 228v2M1069.5 227v2M1070.5 227v3M1071.5 227v2M1072.5 227v3M1073.5 227v3M1074.5 227v3M1077.5 227v2M1078.5 227v2M1079.5 226v3M1081.5 227v3M1082.5 226v4M1085.5 226v3M1086.5 226v3M1088.5 226v4M1093.5 227v2M1096.5 226v3M1097.5 227v3M1100.5 226v4M1105.5 226v3" stroke="#26c9d9" stroke-width="1" fill="none"/>
<path d="M1057.5 341v13M1058.5 344v8M1056.5 343v6M1055.5 344v4M1058.5 346v2M1060.5 345v2M1061.5 346v2M1062.5 346v2M1063.5 346v2M1065.5 345v3M1066.5 345v2M1068.5 346v2M1069.5 345v3M1070.5 346v2M1071.5 345v2M1072.5 345v3M1073.5 346v2M1074.5 346v2M1076.5 344v4M1081.5 344v4M1083.5 344v4M1084.5 344v4M1085.5 344v3M1090.5 345v2M1091.5 344v4M1092.5 344v3M1094.5 345v2M1096.5 345v3M1097.5 345v3M1098.5 345v3M1100.5 344v4M1102.5 344v3M878.5 345v2M881.5 345v2M882.5 345v2M884.5 345v2M885.5 345v2" stroke="#e8405e" stroke-width="1" fill="none"/>
<path d="M1057.5 453v20M1058.5 456v15M1056.5 459v6M1055.5 460v4M1057.5 462v2M1058.5 461v2M1059.5 461v3M1060.5 461v2M1062.5 461v2M1063.5 461v2M1064.5 461v3M1065.5 461v2M1066.5 461v2M1067.5 462v2M1068.5 461v2M1069.5 461v3M1070.5 461v2M1071.5 461v3M1072.5 462v2M1073.5 461v3M1074.5 461v2M1078.5 460v3M1080.5 460v4M1081.5 461v3M1089.5 461v3M1092.5 461v3M1098.5 461v2M1101.5 461v3M1103.5 461v3M1105.5 461v2M880.5 461v2M881.5 461v2M882.5 461v2" stroke="#8fcc38" stroke-width="1" fill="none"/>
<path d="M1057.5 568v21M1058.5 571v16M1056.5 577v6M1055.5 578v4M1057.5 579v2M1058.5 580v2M1060.5 578v5M1062.5 579v4M1063.5 578v4M1064.5 579v4M1065.5 579v4M1066.5 580v3M1067.5 579v3M1068.5 579v3M1069.5 579v2M1070.5 579v2M1071.5 580v3M1072.5 579v4M1073.5 580v3M1074.5 579v2M1079.5 578v4M1080.5 579v3M1087.5 579v2M1094.5 579v2M1095.5 579v3M1098.5 578v4M1102.5 579v3M1103.5 578v3M878.5 579v2M880.5 579v2M883.5 579v2" stroke="#f08c28" stroke-width="1" fill="none"/>
<path d="M1057.5 878v31M1058.5 881v26M1056.5 892v6M1055.5 893v4M1053.5 895v3M1054.5 895v2M1055.5 893v6M1056.5 893v6M1057.5 892v4M1058.5 894v4M1059.5 892v7M1060.5 895v4M1061.5 893v4M1062.5 894v3M1063.5 892v5M1064.5 892v5M1065.5 892v6M1066.5 894v3M1067.5 893v6M1068.5 894v5M1069.5 892v4M1070.5 892v7M1071.5 895v4M1072.5 895v3M1073.5 892v4M1074.5 892v4M1075.5 893v4M1079.5 894v2M1080.5 893v4M1082.5 893v3M1083.5 894v2M1085.5 893v3M1088.5 894v2M1089.5 894v3M1091.5 894v3M1092.5 893v3M1096.5 893v3M1099.5 894v2M1104.5 893v3M878.5 894v2M879.5 894v2M881.5 894v2M883.5 894v2M884.5 894v2M885.5 894v2" stroke="#18d9a2" stroke-width="1" fill="none"/>
<rect x="240" y="346" width="1" height="10" fill="#e8405e"/>
<path d="M10 100.5 H30 L41.5 112.5 L30 124.5 H10 Q6.5 124.5 6.5 121.0 V104.0 Q6.5 100.5 10 100.5 Z" fill="#1e1c06" stroke="#f2e52a" stroke-width="1.15" shape-rendering="geometricPrecision"/>
<text x="15" y="115.2" font-size="11.5" fill="#f2e52a" letter-spacing="2.5" font-family='"Liberation Sans", sans-serif'>C1</text>
<path d="M10 216.5 H30 L41.5 228.5 L30 240.5 H10 Q6.5 240.5 6.5 237.0 V220.0 Q6.5 216.5 10 216.5 Z" fill="#061618" stroke="#26c9d9" stroke-width="1.15" shape-rendering="geometricPrecision"/>
<text x="15" y="231.2" font-size="11.5" fill="#26c9d9" letter-spacing="2.5" font-family='"Liberation Sans", sans-serif'>C2</text>
<path d="M10 334.5 H30 L41.5 346.5 L30 358.5 H10 Q6.5 358.5 6.5 355.0 V338.0 Q6.5 334.5 10 334.5 Z" fill="#1c080c" stroke="#e8405e" stroke-width="1.15" shape-rendering="geometricPrecision"/>
<text x="15" y="349.2" font-size="11.5" fill="#e8405e" letter-spacing="2.5" font-family='"Liberation Sans", sans-serif'>C3</text>
<path d="M10 450.5 H30 L41.5 462.5 L30 474.5 H10 Q6.5 474.5 6.5 471.0 V454.0 Q6.5 450.5 10 450.5 Z" fill="#10180a" stroke="#8fcc38" stroke-width="1.15" shape-rendering="geometricPrecision"/>
<text x="15" y="465.2" font-size="11.5" fill="#8fcc38" letter-spacing="2.5" font-family='"Liberation Sans", sans-serif'>C4</text>
<path d="M10 568.5 H30 L41.5 580.5 L30 592.5 H10 Q6.5 592.5 6.5 589.0 V572.0 Q6.5 568.5 10 568.5 Z" fill="#1e1206" stroke="#f08c28" stroke-width="1.15" shape-rendering="geometricPrecision"/>
<text x="15" y="583.2" font-size="11.5" fill="#f08c28" letter-spacing="2.5" font-family='"Liberation Sans", sans-serif'>C5</text>
<path d="M10 684.5 H30 L41.5 696.5 L30 708.5 H10 Q6.5 708.5 6.5 705.0 V688.0 Q6.5 684.5 10 684.5 Z" fill="#08081c" stroke="#3434c4" stroke-width="1.15" shape-rendering="geometricPrecision"/>
<text x="15" y="699.2" font-size="11.5" fill="#3434c4" letter-spacing="2.5" font-family='"Liberation Sans", sans-serif'>C6</text>
<path d="M10 802.2 H30 L41.5 814.5 L30 826.2 H10 Q6.5 826.2 6.5 822.7 V805.7 Q6.5 802.2 10 802.2 Z" fill="#e050a6" stroke="#e050a6" stroke-width="0" shape-rendering="geometricPrecision"/>
<text x="15" y="817.2" font-size="11.5" fill="#1a1a1a" letter-spacing="2.5" font-family='"Liberation Sans", sans-serif'>C7</text>
<path d="M10 920.5 H30 L41.5 932.5 L30 944.5 H10 Q6.5 944.5 6.5 941.0 V924.0 Q6.5 920.5 10 920.5 Z" fill="#06181a" stroke="#18d9a2" stroke-width="1.15" shape-rendering="geometricPrecision"/>
<text x="15" y="935.2" font-size="11.5" fill="#18d9a2" letter-spacing="2.5" font-family='"Liberation Sans", sans-serif'>C8</text>
<rect x="1716.4" y="60.1" width="29.6" height="12" fill="#000"/>
<text x="1746" y="69.9" font-size="13.4" fill="#f2e52a" text-anchor="end" font-family='"Liberation Sans", sans-serif'>16 V</text>
<rect x="1723.9" y="83.3" width="22.1" height="12" fill="#000"/>
<text x="1746" y="93.1" font-size="13.4" fill="#f2e52a" text-anchor="end" font-family='"Liberation Sans", sans-serif'>8 V</text>
<text x="1746" y="116.3" font-size="13.4" fill="#f2e52a" text-anchor="end" font-family='"Liberation Sans", sans-serif'>0 V</text>
<rect x="1719.4" y="129.7" width="26.6" height="12" fill="#000"/>
<text x="1746" y="139.5" font-size="13.4" fill="#f2e52a" text-anchor="end" font-family='"Liberation Sans", sans-serif'>-8 V</text>
<rect x="1712.0" y="152.9" width="34.0" height="12" fill="#000"/>
<text x="1746" y="162.7" font-size="13.4" fill="#f2e52a" text-anchor="end" font-family='"Liberation Sans", sans-serif'>-16 V</text>
<rect x="1697.8" y="177.1" width="48.2" height="12" fill="#000"/>
<text x="1746" y="186.9" font-size="13.4" fill="#26c9d9" text-anchor="end" font-family='"Liberation Sans", sans-serif'>200 mV</text>
<rect x="1697.8" y="200.3" width="48.2" height="12" fill="#000"/>
<text x="1746" y="210.1" font-size="13.4" fill="#26c9d9" text-anchor="end" font-family='"Liberation Sans", sans-serif'>100 mV</text>
<text x="1746" y="233.3" font-size="13.4" fill="#26c9d9" text-anchor="end" font-family='"Liberation Sans", sans-serif'>0 V</text>
<rect x="1693.4" y="246.7" width="52.6" height="12" fill="#000"/>
<text x="1746" y="256.5" font-size="13.4" fill="#26c9d9" text-anchor="end" font-family='"Liberation Sans", sans-serif'>-100 mV</text>
<rect x="1693.4" y="269.9" width="52.6" height="12" fill="#000"/>
<text x="1746" y="279.7" font-size="13.4" fill="#26c9d9" text-anchor="end" font-family='"Liberation Sans", sans-serif'>-200 mV</text>
<rect x="1697.8" y="294.1" width="48.2" height="12" fill="#000"/>
<text x="1746" y="303.9" font-size="13.4" fill="#e8405e" text-anchor="end" font-family='"Liberation Sans", sans-serif'>400 mV</text>
<rect x="1697.8" y="317.3" width="48.2" height="12" fill="#000"/>
<text x="1746" y="327.1" font-size="13.4" fill="#e8405e" text-anchor="end" font-family='"Liberation Sans", sans-serif'>200 mV</text>
<text x="1746" y="350.3" font-size="13.4" fill="#e8405e" text-anchor="end" font-family='"Liberation Sans", sans-serif'>0 V</text>
<rect x="1693.4" y="363.7" width="52.6" height="12" fill="#000"/>
<text x="1746" y="373.5" font-size="13.4" fill="#e8405e" text-anchor="end" font-family='"Liberation Sans", sans-serif'>-200 mV</text>
<rect x="1693.4" y="386.9" width="52.6" height="12" fill="#000"/>
<text x="1746" y="396.7" font-size="13.4" fill="#e8405e" text-anchor="end" font-family='"Liberation Sans", sans-serif'>-400 mV</text>
<rect x="1697.8" y="411.1" width="48.2" height="12" fill="#000"/>
<text x="1746" y="420.9" font-size="13.4" fill="#8fcc38" text-anchor="end" font-family='"Liberation Sans", sans-serif'>200 mV</text>
<rect x="1697.8" y="434.3" width="48.2" height="12" fill="#000"/>
<text x="1746" y="444.1" font-size="13.4" fill="#8fcc38" text-anchor="end" font-family='"Liberation Sans", sans-serif'>100 mV</text>
<text x="1746" y="467.3" font-size="13.4" fill="#8fcc38" text-anchor="end" font-family='"Liberation Sans", sans-serif'>0 V</text>
<rect x="1693.4" y="480.7" width="52.6" height="12" fill="#000"/>
<text x="1746" y="490.5" font-size="13.4" fill="#8fcc38" text-anchor="end" font-family='"Liberation Sans", sans-serif'>-100 mV</text>
<rect x="1693.4" y="503.9" width="52.6" height="12" fill="#000"/>
<text x="1746" y="513.7" font-size="13.4" fill="#8fcc38" text-anchor="end" font-family='"Liberation Sans", sans-serif'>-200 mV</text>
<rect x="1697.8" y="528.1" width="48.2" height="12" fill="#000"/>
<text x="1746" y="537.9" font-size="13.4" fill="#f08c28" text-anchor="end" font-family='"Liberation Sans", sans-serif'>200 mV</text>
<rect x="1697.8" y="551.3" width="48.2" height="12" fill="#000"/>
<text x="1746" y="561.1" font-size="13.4" fill="#f08c28" text-anchor="end" font-family='"Liberation Sans", sans-serif'>100 mV</text>
<text x="1746" y="584.3" font-size="13.4" fill="#f08c28" text-anchor="end" font-family='"Liberation Sans", sans-serif'>0 V</text>
<rect x="1693.4" y="597.7" width="52.6" height="12" fill="#000"/>
<text x="1746" y="607.5" font-size="13.4" fill="#f08c28" text-anchor="end" font-family='"Liberation Sans", sans-serif'>-100 mV</text>
<rect x="1693.4" y="620.9" width="52.6" height="12" fill="#000"/>
<text x="1746" y="630.7" font-size="13.4" fill="#f08c28" text-anchor="end" font-family='"Liberation Sans", sans-serif'>-200 mV</text>
<rect x="1723.9" y="645.1" width="22.1" height="12" fill="#000"/>
<text x="1746" y="654.9" font-size="13.4" fill="#3434c4" text-anchor="end" font-family='"Liberation Sans", sans-serif'>4 V</text>
<rect x="1723.9" y="668.3" width="22.1" height="12" fill="#000"/>
<text x="1746" y="678.1" font-size="13.4" fill="#3434c4" text-anchor="end" font-family='"Liberation Sans", sans-serif'>2 V</text>
<text x="1746" y="701.3" font-size="13.4" fill="#3434c4" text-anchor="end" font-family='"Liberation Sans", sans-serif'>0 V</text>
<rect x="1719.4" y="714.7" width="26.6" height="12" fill="#000"/>
<text x="1746" y="724.5" font-size="13.4" fill="#3434c4" text-anchor="end" font-family='"Liberation Sans", sans-serif'>-2 V</text>
<rect x="1719.4" y="737.9" width="26.6" height="12" fill="#000"/>
<text x="1746" y="747.7" font-size="13.4" fill="#3434c4" text-anchor="end" font-family='"Liberation Sans", sans-serif'>-4 V</text>
<rect x="1716.4" y="762.1" width="29.6" height="12" fill="#000"/>
<text x="1746" y="771.9" font-size="13.4" fill="#e050a6" text-anchor="end" font-family='"Liberation Sans", sans-serif'>40 V</text>
<rect x="1716.4" y="785.3" width="29.6" height="12" fill="#000"/>
<text x="1746" y="795.1" font-size="13.4" fill="#e050a6" text-anchor="end" font-family='"Liberation Sans", sans-serif'>20 V</text>
<text x="1746" y="818.3" font-size="13.4" fill="#e050a6" text-anchor="end" font-family='"Liberation Sans", sans-serif'>0 V</text>
<rect x="1712.0" y="831.7" width="34.0" height="12" fill="#000"/>
<text x="1746" y="841.5" font-size="13.4" fill="#e050a6" text-anchor="end" font-family='"Liberation Sans", sans-serif'>-20 V</text>
<rect x="1712.0" y="854.9" width="34.0" height="12" fill="#000"/>
<text x="1746" y="864.7" font-size="13.4" fill="#e050a6" text-anchor="end" font-family='"Liberation Sans", sans-serif'>-40 V</text>
<rect x="1723.9" y="879.4" width="22.1" height="12" fill="#000"/>
<text x="1746" y="889.2" font-size="13.4" fill="#18d9a2" text-anchor="end" font-family='"Liberation Sans", sans-serif'>8 V</text>
<rect x="1723.9" y="903.2" width="22.1" height="12" fill="#000"/>
<text x="1746" y="913.0" font-size="13.4" fill="#18d9a2" text-anchor="end" font-family='"Liberation Sans", sans-serif'>4 V</text>
<text x="1746" y="936.8" font-size="13.4" fill="#18d9a2" text-anchor="end" font-family='"Liberation Sans", sans-serif'>0 V</text>
<rect x="1719.4" y="950.8" width="26.6" height="12" fill="#000"/>
<text x="1746" y="960.6" font-size="13.4" fill="#18d9a2" text-anchor="end" font-family='"Liberation Sans", sans-serif'>-4 V</text>
<rect x="1719.4" y="974.6" width="26.6" height="12" fill="#000"/>
<text x="1746" y="984.4" font-size="13.4" fill="#18d9a2" text-anchor="end" font-family='"Liberation Sans", sans-serif'>-8 V</text>
<text x="178.5" y="866" font-size="13" fill="#b4b4b4" text-anchor="middle" font-family='"Liberation Sans", sans-serif'>-8 ms</text>
<text x="353.5" y="866" font-size="13" fill="#b4b4b4" text-anchor="middle" font-family='"Liberation Sans", sans-serif'>-6 ms</text>
<text x="527.5" y="866" font-size="13" fill="#b4b4b4" text-anchor="middle" font-family='"Liberation Sans", sans-serif'>-4 ms</text>
<text x="702.5" y="866" font-size="13" fill="#b4b4b4" text-anchor="middle" font-family='"Liberation Sans", sans-serif'>-2 ms</text>
<text x="877.5" y="866" font-size="13" fill="#b4b4b4" text-anchor="middle" font-family='"Liberation Sans", sans-serif'>0 s</text>
<text x="1052.5" y="866" font-size="13" fill="#b4b4b4" text-anchor="middle" font-family='"Liberation Sans", sans-serif'>2 ms</text>
<text x="1227.5" y="866" font-size="13" fill="#b4b4b4" text-anchor="middle" font-family='"Liberation Sans", sans-serif'>4 ms</text>
<text x="1401.5" y="866" font-size="13" fill="#b4b4b4" text-anchor="middle" font-family='"Liberation Sans", sans-serif'>6 ms</text>
<text x="1576.5" y="866" font-size="13" fill="#b4b4b4" text-anchor="middle" font-family='"Liberation Sans", sans-serif'>8 ms</text>
<path d="M1710 61 H1742 Q1744 61 1744 63 V95 Z" fill="#4b4b4b" shape-rendering="geometricPrecision"/>
<circle cx="1737" cy="67.5" r="4.3" fill="none" stroke="#8a8a8a" stroke-width="1.3" shape-rendering="geometricPrecision"/>
<line x1="1734" y1="70.5" x2="1728.5" y2="76" stroke="#8a8a8a" stroke-width="2" stroke-linecap="round" shape-rendering="geometricPrecision"/>
<path d="M1729.5 908.5 L1742 898.5 V905 H1751 V911.5 H1742 V918.5 Z" fill="#18d9a2" shape-rendering="geometricPrecision"/>
<path d="M867 54 H887 L877 64.5 Z" fill="#f28e22" shape-rendering="geometricPrecision"/>
<path d="M868 874 H886 V892 H880 L877 899 L874 892 H868 Z" fill="#000" stroke="#f28e22" stroke-width="2" shape-rendering="geometricPrecision"/>
<text x="877" y="889" font-size="14" font-weight="bold" fill="#f28e22" text-anchor="middle" font-family='"Liberation Sans", sans-serif'>T</text>
</svg>
<div class="a" style="left:1769px;top:26px;width:149px;height:967px;border:1px solid #67625d;background:#2c2c2c"></div>
<div class="a" style="left:1769px;top:29px;width:151px;text-align:center;font-size:15px;font-weight:bold;color:#f0f0f0;margin-top:-3px">Add New...</div>
<div class="btn" style="left:1777px;top:53px;width:63px;height:37px;line-height:32px;padding-top:1px">Cursors</div>
<div class="btn" style="left:1849px;top:53px;width:63px;height:37px;line-height:32px;padding-top:1px">Note</div>
<div class="btn" style="left:1777px;top:99px;width:63px;height:37px;line-height:32px;padding-top:1px">Measure</div>
<div class="btn" style="left:1849px;top:99px;width:63px;height:37px;line-height:32px;padding-top:1px">Search</div>
<div class="btn" style="left:1777px;top:145px;width:63px;height:37px;line-height:16px;padding-top:1px">Results<br>Table</div>
<div class="btn" style="left:1849px;top:145px;width:63px;height:37px;line-height:32px;padding-top:1px">Plot</div>
<div class="a" style="left:1773px;top:190px;width:144px;height:1px;background:#67625d"></div>
<div class="a" style="left:1773px;top:944px;width:144px;height:1px;background:#67625d"></div>
<div class="btn" style="left:1776px;top:952px;width:63px;height:37px"></div>
<svg class="a" style="left:1776px;top:952px" width="63" height="37"><g fill="#d4d4d4"><rect x="19" y="6" width="2" height="2"/><rect x="24" y="6" width="1.6" height="1.6" fill="#9a9a9a"/><rect x="28.5" y="6" width="1.6" height="1.6" fill="#9a9a9a"/><rect x="33" y="6" width="2" height="2"/><rect x="19" y="10.5" width="1.6" height="1.6" fill="#9a9a9a"/><rect x="19" y="15" width="1.6" height="1.6" fill="#9a9a9a"/><rect x="19" y="19.5" width="2" height="2"/><rect x="33.2" y="10.2" width="1.8" height="1.8"/><rect x="23.5" y="20" width="1.8" height="1.8"/></g><line x1="37" y1="24" x2="42" y2="29.3" stroke="#d0d0d0" stroke-width="3.6" stroke-linecap="round"/><line x1="37" y1="24" x2="42" y2="29.3" stroke="#2c2c2c" stroke-width="1.2" stroke-linecap="round"/><circle cx="33.4" cy="20" r="5" fill="#8c8c8c" stroke="#d0d0d0" stroke-width="1.8"/></svg>
<svg class="a" style="left:1866px;top:953px" width="34" height="36"><path d="M4.5 9 L7.5 31 Q16.7 35.5 26 31 L29 9" fill="#2a2a2a" stroke="#d2d2d2" stroke-width="1.6"/><ellipse cx="16.7" cy="7.5" rx="13" ry="4.3" fill="#1e1e1e" stroke="#d2d2d2" stroke-width="1.8"/><path d="M12 5 Q16.7 2.5 21.5 5" fill="none" stroke="#bdbdbd" stroke-width="1.6"/><path d="M11 12.5 L12.3 30 M16.7 12.5 V31 M22.4 12.5 L21.1 30" stroke="#b8b8b8" stroke-width="1.1"/></svg>
<div class="a" style="left:1760px;top:500px;width:4px;height:4px;border-radius:2px;background:#c8c8c8"></div>
<div class="a" style="left:1760px;top:508px;width:4px;height:4px;border-radius:2px;background:#c8c8c8"></div>
<div class="a" style="left:1760px;top:517px;width:4px;height:4px;border-radius:2px;background:#c8c8c8"></div>
<div class="chb" style="left:3px"><div class="h" style="background:#4b4623;color:#f0e630">Ch 1</div><div class="bd">4 V/div<br>1 M&Omega;<br>20 MHz</div><div style="position:absolute;left:73.5px;top:60px;font-size:10px;color:#111">B</div><div style="position:absolute;left:79.5px;top:64px;font-size:9px;color:#111">w</div></div>
<div class="chb" style="left:98px"><div class="h" style="background:#1f4548;color:#2ad0dc">Ch 2</div><div class="bd">50 mV/div<br>50 &Omega;<br>20 MHz</div><div style="position:absolute;left:73.5px;top:60px;font-size:10px;color:#111">B</div><div style="position:absolute;left:79.5px;top:64px;font-size:9px;color:#111">w</div></div>
<div class="chb" style="left:193px"><div class="h" style="background:#4a252c;color:#f0405e">Ch 3</div><div class="bd">100 mV/div<br>50 &Omega;<br>20 MHz</div><div style="position:absolute;left:73.5px;top:60px;font-size:10px;color:#111">B</div><div style="position:absolute;left:79.5px;top:64px;font-size:9px;color:#111">w</div></div>
<div class="chb" style="left:288px"><div class="h" style="background:#364624;color:#94d43c">Ch 4</div><div class="bd">50 mV/div<br>50 &Omega;<br>20 MHz</div><div style="position:absolute;left:73.5px;top:60px;font-size:10px;color:#111">B</div><div style="position:absolute;left:79.5px;top:64px;font-size:9px;color:#111">w</div></div>
<div class="chb" style="left:383px"><div class="h" style="background:#513821;color:#f49a30">Ch 5</div><div class="bd">50 mV/div<br>50 &Omega;<br>20 MHz</div><div style="position:absolute;left:73.5px;top:60px;font-size:10px;color:#111">B</div><div style="position:absolute;left:79.5px;top:64px;font-size:9px;color:#111">w</div></div>
<div class="chb" style="left:478px"><div class="h" style="background:#22224a;color:#3636d4">Ch 6</div><div class="bd">1 V/div<br>50 &Omega;<br>20 MHz</div><div style="position:absolute;left:73.5px;top:60px;font-size:10px;color:#111">B</div><div style="position:absolute;left:79.5px;top:64px;font-size:9px;color:#111">w</div></div>
<div class="chb" style="left:573px"><div class="h" style="background:#e252a8;color:#1a1a1a">Ch 7</div><div class="bd">10 V/div<br>1 M&Omega;<br>20 MHz</div><div style="position:absolute;left:73.5px;top:60px;font-size:10px;color:#111">B</div><div style="position:absolute;left:79.5px;top:64px;font-size:9px;color:#111">w</div></div>
<div class="chb" style="left:668px"><div class="h" style="background:#1f4a3b;color:#20e0a8">Ch 8</div><div class="bd">2 V/div<br>1 M&Omega;<br>20 MHz</div><div style="position:absolute;left:73.5px;top:60px;font-size:10px;color:#111">B</div><div style="position:absolute;left:79.5px;top:64px;font-size:9px;color:#111">w</div></div>
<div class="a" style="left:1119px;top:998px;width:1px;height:78px;background:#505050"></div>
<div class="a" style="left:1270px;top:998px;width:1px;height:78px;background:#505050"></div>
<div class="btn" style="left:1130px;top:998px;width:40px;height:79px;font-size:15px;line-height:16px;padding-top:17px">Add<br>New<br>Math<div style="position:absolute;left:4px;top:7px;width:30px;height:2px;background:#f28e22"></div></div>
<div class="btn" style="left:1175px;top:998px;width:40px;height:79px;font-size:15px;line-height:16px;padding-top:17px">Add<br>New<br>Ref<div style="position:absolute;left:4px;top:7px;width:30px;height:2px;background:#c8c8d0"></div></div>
<div class="btn" style="left:1220px;top:998px;width:40px;height:79px;font-size:15px;line-height:16px;padding-top:17px">Add<br>New<br>Bus<div style="position:absolute;left:4px;top:7px;width:30px;height:2px;background:#c050f0"></div></div>
<div class="box" style="left:1281px;width:200px"><div class="h">Horizontal</div><div class="bd"></div><div class="t" style="left:7px;top:22px">2 ms/div</div><div class="t" style="left:113px;top:22px">20 ms</div><div class="t" style="left:7px;top:41px;letter-spacing:-0.6px">SR: 62.5 MS/s</div><div class="t" style="left:113px;top:41px">16 ns/pt</div><div class="t" style="left:7px;top:60px">RL: 1.25 Mpts</div><div class="t" style="left:128px;top:60px">50%</div><svg style="position:absolute;left:113px;top:62px" width="12" height="16"><path d="M0.7 1 H9.3 V9.3 H6.5 L5 12.5 L3.5 9.3 H0.7 Z" fill="#000" stroke="#f28e22" stroke-width="1.2"/><text x="5" y="8.3" font-size="8" font-weight="bold" fill="#fff" text-anchor="middle" font-family='"Liberation Sans", sans-serif'>T</text></svg></div>
<div class="box" style="left:1491px;width:160px"><div class="h">Trigger</div><div class="bd"></div><div style="position:absolute;left:7px;top:24px;width:28px;height:15px;border:1px solid #111;border-radius:5px;background:#18d9a2;font-size:14px;text-align:center;line-height:15px;color:#111">8</div><svg style="position:absolute;left:46px;top:25px" width="18" height="14"><path d="M1 12 H5 L13 3 H17" fill="none" stroke="#3030a0" stroke-width="1.2"/></svg><div class="t" style="left:72px;top:22px">4 V</div></div>
<div class="box" style="left:1661px;width:150px"><div class="h">Acquisition</div><div class="bd"></div><div class="t" style="left:7px;top:22px">Auto,</div><div class="t" style="left:66px;top:22px">Analyze</div><div class="t" style="left:7px;top:41px">High Res: 16 bits</div><div class="t" style="left:7px;top:60px">Single: 1 /1</div></div>
<div class="a" style="left:1821px;top:998px;width:88px;height:35px;border:1px solid #6a6a6a;border-radius:7px;background:#fe1f28;color:#fff;font-weight:bold;font-size:13px;text-align:center;line-height:31px">Stopped</div>
<div class="a" style="left:1821px;top:1042px;width:90px;height:36px;border-radius:5px;background:#c8c8c8;color:#111;font-size:15.5px;text-align:center;line-height:17px;padding-top:1px;box-sizing:border-box">24 Apr 2025<br>10:22:58</div>
</body></html>
